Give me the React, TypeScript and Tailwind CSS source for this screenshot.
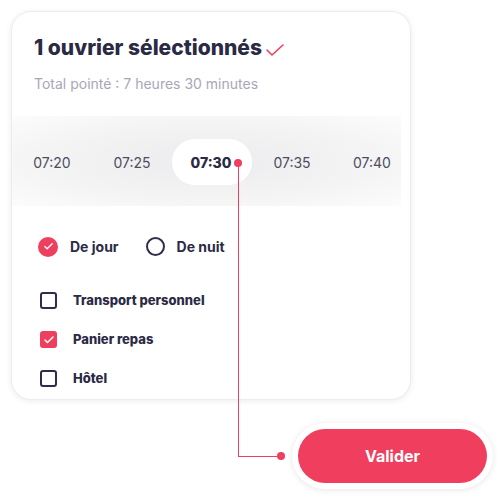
import { Check } from "lucide-react";

const times = ["07:20", "07:25", "07:30", "07:35", "07:40"];

const extras = [
  { label: "Transport personnel", checked: false },
  { label: "Panier repas", checked: true },
  { label: "Hôtel", checked: false },
];

const Box = ({ checked }: { checked: boolean }) =>
  checked ? (
    <span className="flex h-[17px] w-[17px] items-center justify-center rounded-[3px] bg-[#ee3f5e]">
      <Check size={12} strokeWidth={3} className="text-white" />
    </span>
  ) : (
    <span className="h-[17px] w-[17px] rounded-[3px] border-2 border-[#2f2e4a]" />
  );

const App = () => {
  return (
    <div className="relative h-[500px] w-[500px] overflow-hidden bg-white font-['Inter',sans-serif]">
      <div className="ml-[11px] mt-[11px] h-[389px] w-[400px] rounded-[20px] border border-[#ececec] bg-white shadow-[0_1px_6px_rgba(0,0,0,0.08)]">
        <div className="px-[22px] pt-[22px]">
          <h1 className="flex items-center text-[21px] font-extrabold leading-[28px] text-[#2b2a45]">
            1 ouvrier sélectionnés
            <svg width="18" height="14" viewBox="0 0 18 14" className="ml-[4px] mt-[4px]">
              <path d="M1 7 L6 12 L17 2" fill="none" stroke="#ee3f5e" strokeWidth="1.6" strokeLinecap="round" strokeLinejoin="round" />
            </svg>
          </h1>
          <p className="mt-[13px] text-[14px] leading-[18px] text-[#a8a7b8]">
            Total pointé : 7 heures 30 minutes
          </p>
        </div>

        <div className="mt-[23px] grid h-[90px] w-[389px] grid-cols-[repeat(5,80px)] items-center bg-[radial-gradient(ellipse_at_center,#ececee_0%,#f3f3f4_55%,#fcfcfc_100%)] pt-[2px]">
          {times.map((t) =>
            t === "07:30" ? (
              <span
                key={t}
                className="flex h-[46px] w-[80px] items-center justify-center rounded-full bg-white pr-[2px] text-[14px] font-extrabold text-[#2b2a45]"
              >
                {t}
              </span>
            ) : (
              <span key={t} className="text-center text-[14px] text-[#4d4c60]">
                {t}
              </span>
            )
          )}
        </div>

        <div className="mt-[30px] flex items-center px-[26px]">
          <span className="flex h-[20px] w-[20px] items-center justify-center rounded-full bg-[#ee3f5e]">
            <Check size={11} strokeWidth={3} className="text-white" />
          </span>
          <span className="ml-[12px] text-[14px] font-bold text-[#2b2a45]">De jour</span>
          <span className="ml-[27px] h-[19px] w-[19px] rounded-full border-2 border-[#2f2e4a]" />
          <span className="ml-[12px] text-[14px] font-bold text-[#2b2a45]">De nuit</span>
        </div>

        <div className="mt-[35px] flex flex-col gap-[22px] px-[28px]">
          {extras.map((e) => (
            <div key={e.label} className="flex h-[17px] items-center">
              <Box checked={e.checked} />
              <span className="ml-[16px] text-[13px] font-extrabold text-[#2b2a45]">{e.label}</span>
            </div>
          ))}
        </div>
      </div>

      <div className="ml-[292px] mt-[23px] flex h-[66px] w-[201px] items-center justify-center rounded-full bg-white p-[6px] shadow-[0_1px_6px_rgba(0,0,0,0.1)]">
        <button className="h-full w-full rounded-full bg-[#ef3e5e] text-[16px] font-bold text-white">
          Valider
        </button>
      </div>

      {/* connector from selected time to button */}
      <span className="absolute left-[234px] top-[159px] h-[8px] w-[8px] rounded-full bg-[#ee3f5e]" />
      <span className="absolute left-[238px] top-[163px] h-[293px] w-px bg-[#ee3f5e]" />
      <span className="absolute left-[238px] top-[456px] h-px w-[40px] bg-[#ee3f5e]" />
      <span className="absolute left-[277px] top-[452px] h-[8px] w-[8px] rounded-full bg-[#ee3f5e]" />
    </div>
  );
};

export default App;
